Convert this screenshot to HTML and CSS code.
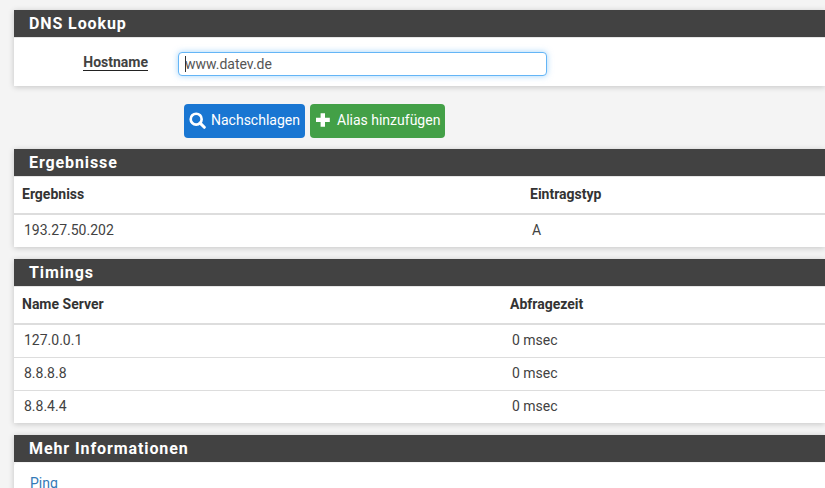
FILE: index.html
```html
<!DOCTYPE html>
<html lang="de">
<head>
  <meta charset="UTF-8">
  <title>DNS Lookup</title>
  <link rel="stylesheet" href="styles.css">
</head>
<body>
  <form class="panel">
    <h2 class="panel-heading">DNS Lookup</h2>
    <div class="panel-body form-row">
      <label class="form-label" for="hostname"><span>Hostname</span></label>
      <div class="input-wrap">
        <input class="form-input" id="hostname" type="text" value="www.datev.de">
        <span class="caret"></span>
      </div>
    </div>
  </form>

  <div class="actions">
    <button type="button" class="btn btn-blue">
      <svg class="icon" viewBox="0 0 18 18" width="17" height="17">
        <circle cx="7.6" cy="7.6" r="5.8" fill="none" stroke="#fff" stroke-width="2.8"/>
        <path d="M11.8 11.8 L16.2 16.2" stroke="#fff" stroke-width="3.2" stroke-linecap="round"/>
      </svg>
      Nachschlagen
    </button>
    <button type="button" class="btn btn-green">
      <svg class="icon" viewBox="0 0 16 16" width="16" height="16">
        <path d="M5.6 1.2 H10 V5.8 H14.8 V10 H10 V14.8 H5.6 V10 H1 V5.8 H5.6 Z" fill="#fff"/>
      </svg>
      Alias hinzufügen
    </button>
  </div>

  <section class="panel">
    <h2 class="panel-heading">Ergebnisse</h2>
    <table class="data-table results">
      <thead>
        <tr><th>Ergebniss</th><th>Eintragstyp</th></tr>
      </thead>
      <tbody>
        <tr><td>193.27.50.202</td><td>A</td></tr>
      </tbody>
    </table>
  </section>

  <section class="panel">
    <h2 class="panel-heading">Timings</h2>
    <table class="data-table timings">
      <thead>
        <tr><th>Name Server</th><th>Abfragezeit</th></tr>
      </thead>
      <tbody>
        <tr><td>127.0.0.1</td><td>0 msec</td></tr>
        <tr><td>8.8.8.8</td><td>0 msec</td></tr>
        <tr><td>8.8.4.4</td><td>0 msec</td></tr>
      </tbody>
    </table>
  </section>

  <section class="panel panel-links">
    <h2 class="panel-heading">Mehr Informationen</h2>
    <div class="panel-body links">
      <a href="#">Ping</a>
    </div>
  </section>
</body>
</html>
```

FILE: styles.css
```css
html, body { height: 100%; }
body {
  margin: 0;
  padding: 10px 0 0 14px;
  box-sizing: border-box;
  overflow: hidden;
  background-color: #f4f4f4;
  color: #333;
  font-family: Roboto, sans-serif;
  font-size: 14px;
}
.panel {
  display: block;
  margin-bottom: 12px;
  background: #fff;
  box-shadow: 0 1px 6px rgba(0, 0, 0, 0.2);
}
.panel-heading {
  height: 27px;
  margin: 0;
  padding-left: 15px;
  background-color: #424242;
  color: #fff;
  font-size: 16px;
  font-weight: 700;
  line-height: 28px;
  letter-spacing: 0.9px;
}
.panel-body { background: #fff; }
.form-row {
  display: flex;
  align-items: center;
  height: 49px;
  border-top: 1px solid #e6e6e6;
  box-sizing: border-box;
}
.form-label {
  width: 134px;
  text-align: right;
  font-weight: 700;
  color: #424242;
}
.form-label span {
  display: inline-block;
  border-bottom: 1px solid #222;
  line-height: 16px;
}
.input-wrap {
  position: relative;
  margin: 4px 0 0 30px;
}
.form-input {
  display: block;
  width: 369px;
  height: 24px;
  padding: 0 6px;
  box-sizing: border-box;
  border: 1px solid #64b5f6;
  border-radius: 4px;
  outline: none;
  box-shadow: 0 0 6px rgba(100, 181, 246, 0.6);
  color: #555;
  font-family: Roboto, sans-serif;
  font-size: 14px;
}
.caret {
  position: absolute;
  top: 4px;
  left: 7px;
  width: 1px;
  height: 16px;
  background: #333;
}
.actions {
  display: flex;
  gap: 5px;
  margin: 18px 0 11px 170px;
}
.btn {
  display: flex;
  align-items: center;
  height: 34px;
  padding: 0 0 2px 5px;
  border: none;
  border-radius: 4px;
  color: #fff;
  font-family: Roboto, sans-serif;
  font-size: 14px;
  font-weight: 400;
  white-space: nowrap;
}
.btn-blue { gap: 5px; width: 121px; background-color: #1976d2; }
.btn-green { gap: 6px; width: 135px; background-color: #43a047; }
.icon { display: block; flex: none; }
.data-table {
  width: 100%;
  table-layout: fixed;
  border-collapse: separate;
  border-spacing: 0;
  border-top: 1px solid #e6e6e6;
}
.results th:first-child, .results td:first-child { width: 508px; }
.timings th:first-child, .timings td:first-child { width: 488px; }
.data-table th {
  height: 38px;
  padding: 0 8px 2px;
  border-bottom: 2px solid #ddd;
  box-sizing: border-box;
  text-align: left;
  font-weight: 700;
  color: #333;
}
.data-table td {
  height: 33px;
  padding: 0 10px 2px;
  border-top: 1px solid #ddd;
  box-sizing: border-box;
  color: #424242;
}
.data-table tbody tr:first-child td { height: 32px; border-top: none; }
.panel-links { background: transparent; }
.links {
  margin-top: 1px;
  padding: 12px 16px;
  border-radius: 4px 0 0 0;
}
.links a { color: #337ab7; text-decoration: none; }
```
